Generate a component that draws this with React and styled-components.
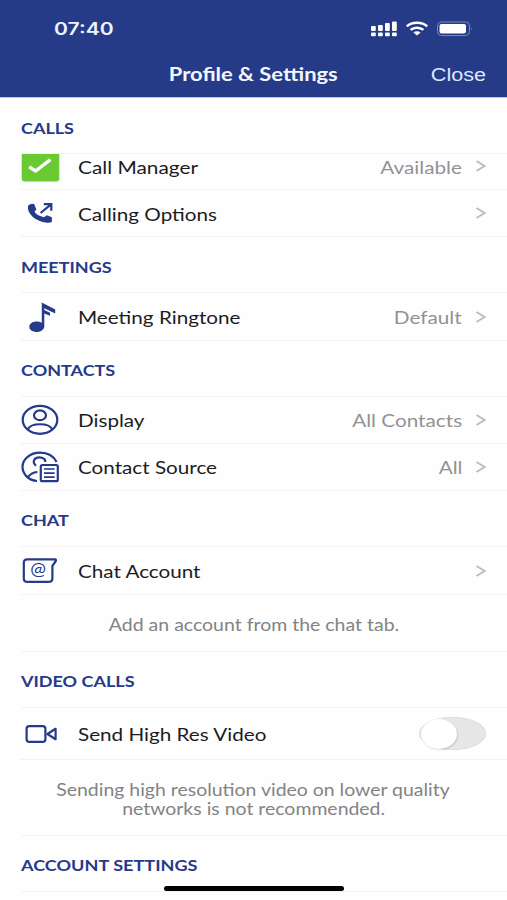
import styled, { createGlobalStyle } from 'styled-components';

const GlobalStyle = createGlobalStyle`
	* {
		box-sizing: border-box;
	}

	body {
		margin: 0;
		background: #fefefe;
		font-family: Lato, 'Liberation Sans', sans-serif;
	}
`;

const Screen = styled.div`
	position: relative;
	width: 507px;
	height: 900px;
	overflow: hidden;
	background: #fefefe;
`;

const Header = styled.header`
	height: 98px;
	background: #253b87;
	border-bottom: 1px solid #b9c5ea;
`;

const StatusBar = styled.div`
	display: flex;
	justify-content: space-between;
	align-items: center;
	height: 56px;
	padding: 1px 34px 0 54px;
`;

// labels are wide, so the glyphs are stretched from one side
const Wide = styled.span`
	display: inline-block;
	white-space: nowrap;
	transform: scaleX(${({ $x }) => $x || 1.2});
	transform-origin: ${({ $from }) => $from || 'left'} center;
`;

const Time = styled(Wide)`
	padding-top: 1px;
	font: 600 17px/20px Inter, sans-serif;
	color: #eef2ff;
`;

const StatusIcons = styled.svg`
	display: block;
	width: 103px;
	height: 18px;
`;

const NavBar = styled.div`
	display: grid;
	grid-template-columns: 1fr auto 1fr;
	align-items: center;
	height: 37px;
	padding: 0 21px;
`;

const Title = styled(Wide)`
	grid-column: 2;
	padding-bottom: 2px;
	font-size: 18px;
	font-weight: 700;
	line-height: 24px;
	color: #f4f6ff;
`;

const Close = styled(Wide)`
	justify-self: end;
	font: 18px/24px 'Liberation Sans', sans-serif;
	color: #dfe6ff;
`;

const SectionTitle = styled.h2`
	height: 56px;
	margin: 0 0 0 21px;
	padding-top: ${({ $top }) => $top || 19}px;
	border-bottom: 1px solid #f3f3f4;
	font-size: 15px;
	font-weight: 700;
	line-height: 20px;
	color: #263a8a;
`;

const Rows = styled.div`
	overflow: hidden;
`;

const RowBox = styled.div`
	display: flex;
	align-items: center;
	height: ${({ $height }) => $height || 47}px;
	margin-top: ${({ $scrolled }) => ($scrolled ? -11 : 0)}px;
	margin-left: 20px;
	padding-right: 21px;
	border-bottom: 1px solid #f3f3f4;
`;

const IconSvg = styled.svg`
	flex: none;
	width: 40px;
	height: 36px;
	margin-right: 18px;
	fill: none;
	stroke: #263a8a;
	stroke-width: 2.2;
	stroke-linejoin: round;
`;

const Label = styled(Wide)`
	padding-top: ${({ $drop }) => $drop || 2}px;
	font-size: 17px;
	line-height: 22px;
	color: #1c1c1e;
`;

const Value = styled(Wide)`
	margin-left: auto;
	padding-top: ${({ $drop }) => $drop || 2}px;
	font-size: 17px;
	line-height: 22px;
	color: #929294;
`;

const Chevron = styled.svg`
	flex: none;
	width: 10px;
	height: 14px;
	margin-left: 14px;
	fill: none;
	stroke: #bcbcbe;
	stroke-width: 2;
`;

const Note = styled.div`
	display: flex;
	flex-direction: column;
	align-items: center;
	height: ${({ $height }) => $height}px;
	margin-left: 21px;
	padding: 21px 21px 0 0;
	border-bottom: 1px solid #f3f3f4;
	font-size: 16.5px;
	line-height: 19px;
	color: #838385;
`;

const Toggle = styled.div`
	width: 67px;
	height: 33px;
	margin-left: auto;
	padding: 1.5px 2px;
	border-radius: 34px / 17px;
	background: #e7e7e8;
	box-shadow: inset 0 0 1px 1px #dededf;
`;

const Knob = styled.div`
	width: 36px;
	height: 30px;
	border-radius: 50%;
	background: #fff;
	box-shadow: 1px 1px 2px rgba(0, 0, 0, 0.14);
`;

const HomeIndicator = styled.div`
	position: absolute;
	left: 164px;
	bottom: 9px;
	width: 180px;
	height: 5px;
	border-radius: 3px;
	background: #000;
`;

const icons = {
	available: (
		<>
			<rect x="1.7" y="2" width="37.6" height="31.4" rx="3" fill="#6bca31" stroke="none" />
			<path d="M9.2 18.8L15.6 23L30.4 11.6" stroke="#fff" strokeWidth="3.4" strokeLinejoin="miter" />
		</>
	),
	calling: (
		<>
			<path
				d="M8 11Q9.4 8.8 14 8.8L16.4 14.4L14.4 16.8Q17.4 21 24 22.2L26.8 20.2L31.9 22.2V26.8Q30.8 28 27 27.8C14.6 26.4 6.8 18 8 11Z"
				fill="#263a8a"
				stroke="none"
			/>
			<path d="M20.6 18L31 9.4M23.8 9.2H31.3V15.8" strokeLinejoin="miter" />
		</>
	),
	ringtone: (
		<path
			d="M21.8 3.4L35.2 10.4V14.4L24.3 9.2V11L30 13.8V16.8L24.3 14.4V28A7.6 5.2 0 1 1 21.8 23.8Z"
			fill="#263a8a"
			stroke="none"
		/>
	),
	display: (
		<>
			<ellipse cx="20" cy="17.8" rx="17.3" ry="14" />
			<ellipse cx="20" cy="13.3" rx="6" ry="4.9" />
			<path d="M7.8 27.2C11 20.6 29 20.6 32.2 27.2" />
		</>
	),
	source: (
		<>
			<path d="M36.6 13C33.6 7 27.4 3.6 20 3.6C10.3 3.6 2.5 10 2.5 17.8C2.5 25.2 8.6 31.2 17 32" />
			<path d="M16 16.8C11.4 12.6 14.6 8.4 19.4 8.4C23 8.4 25.4 10.4 25.4 13" />
			<path d="M8 28.2C9.8 25.4 13 23.4 17.4 23" />
			<rect x="20.8" y="16" width="17" height="16.2" rx="1.5" />
			<path d="M24 20H34.6M24 24.1H34.6M24 28.2H34.6" strokeWidth="1.7" />
		</>
	),
	chat: (
		<>
			<path d="M7 6.4H35Q36.6 6.6 35.8 8L32.4 12.8V25.4Q32.4 28.8 28.4 28.8H7.6Q3.8 28.8 3.8 25.4V9.6Q3.8 6.4 7 6.4Z" />
			<text
				transform="translate(18 22) scale(1.14 1)"
				textAnchor="middle"
				fontSize="16.5"
				fontFamily="Lato"
				fill="#263a8a"
				stroke="none"
			>
				@
			</text>
		</>
	),
	video: (
		<>
			<rect x="6.6" y="10.2" width="18.8" height="15.6" rx="2.6" />
			<path d="M27.4 18L35.6 12.8V23.2Z" />
		</>
	),
};

const Icon = ({ name }) => <IconSvg viewBox="0 0 40 36">{icons[name]}</IconSvg>;

const Row = ({ icon, label, value, drop, x = 1.215, children, ...rest }) => {
	return (
		<RowBox {...rest}>
			<Icon name={icon} />
			<Label $x={x} $drop={drop}>
				{label}
			</Label>
			{children || (
				<>
					<Value $from="right" $x={1.22} $drop={drop}>
						{value}
					</Value>
					<Chevron viewBox="0 0 10 14">
						<path d="M0.5 2L8.5 7L0.5 12" />
					</Chevron>
				</>
			)}
		</RowBox>
	);
};

const App = () => {
	return (
		<Screen>
			<GlobalStyle />
			<Header>
				<StatusBar>
					<Time $x={1.24}>07:40</Time>
					<StatusIcons viewBox="0 0 103 18" fill="#fff">
						<g>
							<rect x="1" y="6" width="4.8" height="5" rx="1" />
							<rect x="8" y="5" width="4.8" height="6" rx="1" />
							<rect x="15" y="3" width="4.8" height="8" rx="1" />
							<rect x="22" y="1.5" width="4.8" height="9.5" rx="1" />
							<rect x="1" y="12.5" width="4.8" height="3.7" rx="1" />
							<rect x="8" y="12.5" width="4.8" height="3.7" rx="1" />
							<rect x="15" y="12.5" width="4.8" height="3.7" rx="1" />
							<rect x="22" y="12.5" width="4.8" height="3.7" rx="1" />
						</g>
						<g fill="none" stroke="#fff" strokeWidth="2.5">
							<path d="M36.8 6.4C42 1.6 52 1.6 57.2 6.4" />
							<path d="M40.6 9.9C44 6.9 50 6.9 53.4 9.9" />
						</g>
						<path d="M43.4 12.4C45.4 10.7 48.6 10.7 50.6 12.4L47 15.6Z" />
						<rect x="67.5" y="2" width="32" height="13.6" rx="4" fill="none" stroke="#7c89b9" />
						<rect x="69.5" y="4" width="26.5" height="9.6" rx="2" />
						<path d="M101 7Q102.6 8.8 101 10.6Z" fill="#7c89b9" />
					</StatusIcons>
				</StatusBar>
				<NavBar>
					<Title $from="center" $x={1.22}>
						Profile &amp; Settings
					</Title>
					<Close $from="right">Close</Close>
				</NavBar>
			</Header>

			<SectionTitle $top={20}>
				<Wide>CALLS</Wide>
			</SectionTitle>
			<Rows>
				<Row icon="available" label="Call Manager" value="Available" drop={4} x={1.225} $scrolled />
				<Row icon="calling" label="Calling Options" drop={3} />
			</Rows>

			<SectionTitle $top={20}>
				<Wide>MEETINGS</Wide>
			</SectionTitle>
			<Row icon="ringtone" label="Meeting Ringtone" value="Default" $height={48} />

			<SectionTitle>
				<Wide>CONTACTS</Wide>
			</SectionTitle>
			<Row icon="display" label="Display" value="All Contacts" />
			<Row icon="source" label="Contact Source" value="All" />

			<SectionTitle>
				<Wide>CHAT</Wide>
			</SectionTitle>
			<Row icon="chat" label="Chat Account" $height={48} />
			<Note $height={57}>
				<Wide $from="center" $x={1.18}>
					Add an account from the chat tab.
				</Wide>
			</Note>

			<SectionTitle>
				<Wide>VIDEO CALLS</Wide>
			</SectionTitle>
			<Row icon="video" label="Send High Res Video" $height={52}>
				<Toggle>
					<Knob />
				</Toggle>
			</Row>
			<Note $height={76}>
				<Wide $from="center" $x={1.178}>
					Sending high resolution video on lower quality
				</Wide>
				<Wide $from="center" $x={1.178}>
					networks is not recommended.
				</Wide>
			</Note>

			<SectionTitle>
				<Wide $x={1.205}>ACCOUNT SETTINGS</Wide>
			</SectionTitle>
			<HomeIndicator />
		</Screen>
	);
};

export default App;
